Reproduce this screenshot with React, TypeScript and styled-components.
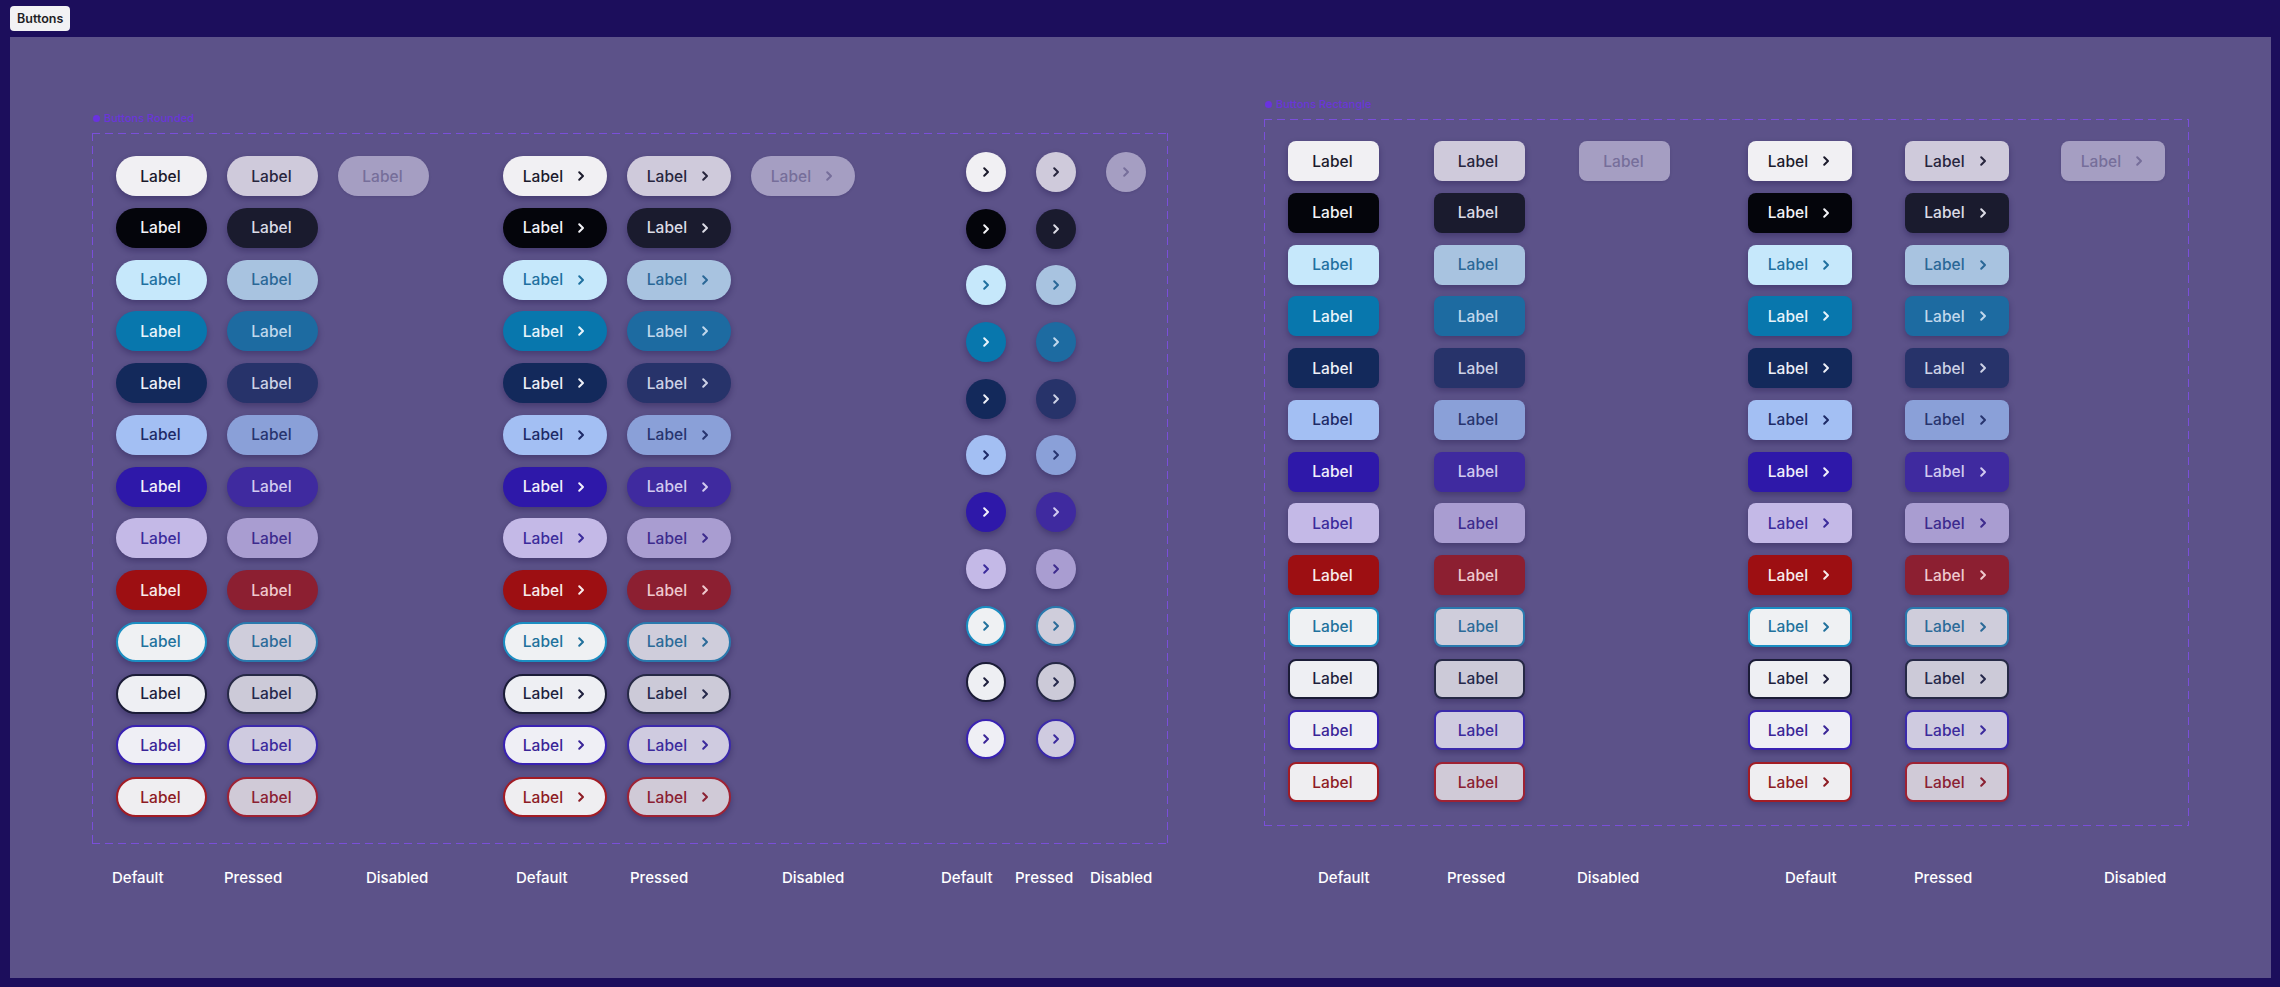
import styled, { createGlobalStyle } from "styled-components";

type Tone = {
  key: string;
  bg: string;
  fg: string;
  pbg: string;
  pfg: string;
  border?: string;
  pborder?: string;
  circle?: boolean;
};

const TONES: Tone[] = [
  { key: "light", bg: "#f1f0f3", fg: "#1b1a2b", pbg: "#cfcadb", pfg: "#27253d" },
  { key: "black", bg: "#04050b", fg: "#f4f4f8", pbg: "#1a1b2e", pfg: "#dcdce6" },
  { key: "sky", bg: "#c6e8fb", fg: "#1f709f", pbg: "#a8c3e0", pfg: "#2a6796" },
  { key: "teal", bg: "#0877ad", fg: "#e8f4fb", pbg: "#1d6ba1", pfg: "#c1d8ec" },
  { key: "navy", bg: "#13295b", fg: "#eef0f8", pbg: "#27336a", pfg: "#cdd2e6" },
  { key: "periwinkle", bg: "#a3bff3", fg: "#1d2a66", pbg: "#8aa0d8", pfg: "#27346e" },
  { key: "violet", bg: "#2e18a9", fg: "#f2f0fb", pbg: "#3f2a9f", pfg: "#d2caf0" },
  { key: "lavender", bg: "#c4b9e7", fg: "#3b2b9b", pbg: "#a99dd1", pfg: "#3d2b8d" },
  { key: "red", bg: "#9d0f12", fg: "#f8ecec", pbg: "#8c1f31", pfg: "#efc9ce", circle: false },
  { key: "o-teal", bg: "#eff1f3", fg: "#21719c", pbg: "#cfcddb", pfg: "#2b6a98", border: "#1b8ec2", pborder: "#2a79ad" },
  { key: "o-dark", bg: "#eeeff3", fg: "#1e1f3d", pbg: "#cccad8", pfg: "#25284a", border: "#1b1c37", pborder: "#262946" },
  { key: "o-violet", bg: "#efeff5", fg: "#3a2597", pbg: "#cfcbe0", pfg: "#3b2a9c", border: "#3922b2", pborder: "#3b2aaa" },
  { key: "o-red", bg: "#efeef1", fg: "#8d1b24", pbg: "#d0cad7", pfg: "#8a2032", border: "#a21c25", pborder: "#9e2234", circle: false },
];

const DISABLED = { bg: "#a59ec2", fg: "#766e9a" };

type Shape = "pill" | "rect" | "circle";

const GlobalStyle = createGlobalStyle`
  html, body {
    margin: 0;
    background: #1c0e5c;
    font-family: Inter, "DejaVu Sans", sans-serif;
  }
  * { box-sizing: border-box; }
`;

function Chevron() {
  return (
    <svg width="8" height="12" viewBox="0 0 8 12" fill="none">
      <path d="M2.2 2.2L6 6l-3.8 3.8" stroke="currentColor" strokeWidth="2" strokeLinecap="round" strokeLinejoin="round" />
    </svg>
  );
}

function DemoButton({ shape, width, tone, state, arrow }: { shape: Shape; width: number; tone: Tone; state: "default" | "pressed" | "disabled"; arrow?: boolean }) {
  const bg = state === "disabled" ? DISABLED.bg : state === "pressed" ? tone.pbg : tone.bg;
  const fg = state === "disabled" ? DISABLED.fg : state === "pressed" ? tone.pfg : tone.fg;
  const border = state === "pressed" ? tone.pborder : state === "default" ? tone.border : undefined;
  return (
    <Btn $shape={shape} $w={width} $bg={bg} $fg={fg} $border={border} $flat={state === "disabled"}>
      {shape !== "circle" && <span>Label</span>}
      {arrow && <Chevron />}
    </Btn>
  );
}

function ButtonGroup({ shape, width, gap, rowGap, arrow, circle }: { shape: Shape; width: number; gap: number; rowGap: number; arrow?: boolean; circle?: boolean }) {
  const tones = circle ? TONES.filter((t) => t.circle !== false) : TONES;
  return (
    <Group $rowGap={rowGap} $top={circle ? -4 : 0}>
      {tones.map((tone, i) => (
        <Row key={tone.key} $gap={gap}>
          <DemoButton shape={shape} width={width} tone={tone} state="default" arrow={arrow} />
          <DemoButton shape={shape} width={width} tone={tone} state="pressed" arrow={arrow} />
          {i === 0 && <DemoButton shape={shape} width={width} tone={tone} state="disabled" arrow={arrow} />}
        </Row>
      ))}
    </Group>
  );
}

const LEFT_LABELS = [
  ["Default", 112], ["Pressed", 142], ["Disabled", 150],
  ["Default", 114], ["Pressed", 152], ["Disabled", 159],
  ["Default", 74], ["Pressed", 75], ["Disabled", 0],
] as const;

const RIGHT_LABELS = [
  ["Default", 129], ["Pressed", 130], ["Disabled", 208],
  ["Default", 129], ["Pressed", 190], ["Disabled", 0],
] as const;

export default function App() {
  return (
    <Page>
      <GlobalStyle />
      <Tag>Buttons</Tag>
      <Canvas>
        <Section $top={74}>
          <FrameTitle>
            <Dot />
            Buttons Rounded
          </FrameTitle>
          <Frame $pad="23px 22px 27px 24px">
            <ButtonGroup shape="pill" width={91} gap={20} rowGap={11.75} />
            <Spacer $w={74} />
            <ButtonGroup shape="pill" width={104} gap={20} rowGap={11.75} arrow />
            <Spacer $w={111} />
            <ButtonGroup shape="circle" width={40} gap={30} rowGap={16.7} arrow circle />
          </Frame>
          <LabelRow $top={24} $indent={20}>
            {LEFT_LABELS.map(([text, w], i) => (
              <StateLabel key={i} $w={w}>{text}</StateLabel>
            ))}
          </LabelRow>
        </Section>
        <Section $top={60}>
          <FrameTitle>
            <Dot />
            Buttons Rectangle
          </FrameTitle>
          <Frame $pad="22px 24px 24px 24px">
            <ButtonGroup shape="rect" width={91} gap={54.5} rowGap={11.75} />
            <Spacer $w={78} />
            <ButtonGroup shape="rect" width={104} gap={52.5} rowGap={11.75} arrow />
          </Frame>
          <LabelRow $top={42} $indent={54}>
            {RIGHT_LABELS.map(([text, w], i) => (
              <StateLabel key={i} $w={w}>{text}</StateLabel>
            ))}
          </LabelRow>
        </Section>
      </Canvas>
    </Page>
  );
}

const Page = styled.div`
  display: flex;
  flex-direction: column;
  align-items: flex-start;
  padding: 6px 9px 0 10px;
  height: 987px;
  overflow: hidden;
`;

const Tag = styled.div`
  height: 25px;
  padding: 0 7px;
  display: flex;
  align-items: center;
  background: #f2f2f4;
  border-radius: 4px;
  color: #1e1e24;
  font-size: 12.5px;
  font-weight: 600;
`;

const Canvas = styled.div`
  margin-top: 6px;
  width: 2261px;
  height: 941px;
  background: #5c5289;
  display: flex;
  align-items: flex-start;
  gap: 96px;
  padding-left: 82px;
`;

const Section = styled.div<{ $top: number }>`
  margin-top: ${(p) => p.$top}px;
  display: flex;
  flex-direction: column;
`;

const FrameTitle = styled.div`
  height: 14px;
  margin-bottom: 8px;
  display: flex;
  align-items: center;
  gap: 4px;
  padding-left: 1px;
  font-size: 11px;
  font-weight: 500;
  color: #6a36d8;
`;

const Dot = styled.span`
  width: 7px;
  height: 7px;
  border-radius: 50%;
  background: #6a32e0;
`;

const dash = "#7a4fd9";

const Frame = styled.div<{ $pad: string }>`
  display: flex;
  align-items: flex-start;
  padding: ${(p) => p.$pad};
  background:
    repeating-linear-gradient(90deg, ${dash} 0 8px, transparent 8px 13px) top left / 100% 1px no-repeat,
    repeating-linear-gradient(90deg, ${dash} 0 8px, transparent 8px 13px) bottom left / 100% 1px no-repeat,
    repeating-linear-gradient(180deg, ${dash} 0 8px, transparent 8px 13px) top left / 1px 100% no-repeat,
    repeating-linear-gradient(180deg, ${dash} 0 8px, transparent 8px 13px) top right / 1px 100% no-repeat;
`;

const Spacer = styled.div<{ $w: number }>`
  flex: 0 0 ${(p) => p.$w}px;
`;

const Group = styled.div<{ $rowGap: number; $top: number }>`
  display: flex;
  flex-direction: column;
  gap: ${(p) => p.$rowGap}px;
  margin-top: ${(p) => p.$top}px;
`;

const Row = styled.div<{ $gap: number }>`
  display: flex;
  gap: ${(p) => p.$gap}px;
`;

const Btn = styled.button<{ $shape: Shape; $w: number; $bg: string; $fg: string; $border?: string; $flat: boolean }>`
  width: ${(p) => p.$w}px;
  height: 40px;
  flex: 0 0 auto;
  display: flex;
  align-items: center;
  justify-content: center;
  gap: 14px;
  padding: 0 ${(p) => (p.$shape === "circle" ? 0 : 2)}px 0 0;
  border: ${(p) => (p.$border ? `2px solid ${p.$border}` : "none")};
  border-radius: ${(p) => (p.$shape === "rect" ? "8px" : "999px")};
  background: ${(p) => p.$bg};
  color: ${(p) => p.$fg};
  box-shadow: ${(p) => (p.$flat ? "0 1px 3px rgba(20, 10, 60, 0.12)" : "0 3px 6px rgba(20, 10, 60, 0.32)")};
  font-family: Inter, "DejaVu Sans", sans-serif;
  font-size: 15.5px;
  font-weight: 500;
  letter-spacing: 0.1px;

  svg {
    flex: 0 0 auto;
  }
`;

const LabelRow = styled.div<{ $top: number; $indent: number }>`
  display: flex;
  margin-top: ${(p) => p.$top}px;
  padding-left: ${(p) => p.$indent}px;
`;

const StateLabel = styled.div<{ $w: number }>`
  flex: 0 0 ${(p) => (p.$w ? `${p.$w}px` : "auto")};
  line-height: 20px;
  font-size: 15px;
  font-weight: 500;
  color: #ffffff;
`;
